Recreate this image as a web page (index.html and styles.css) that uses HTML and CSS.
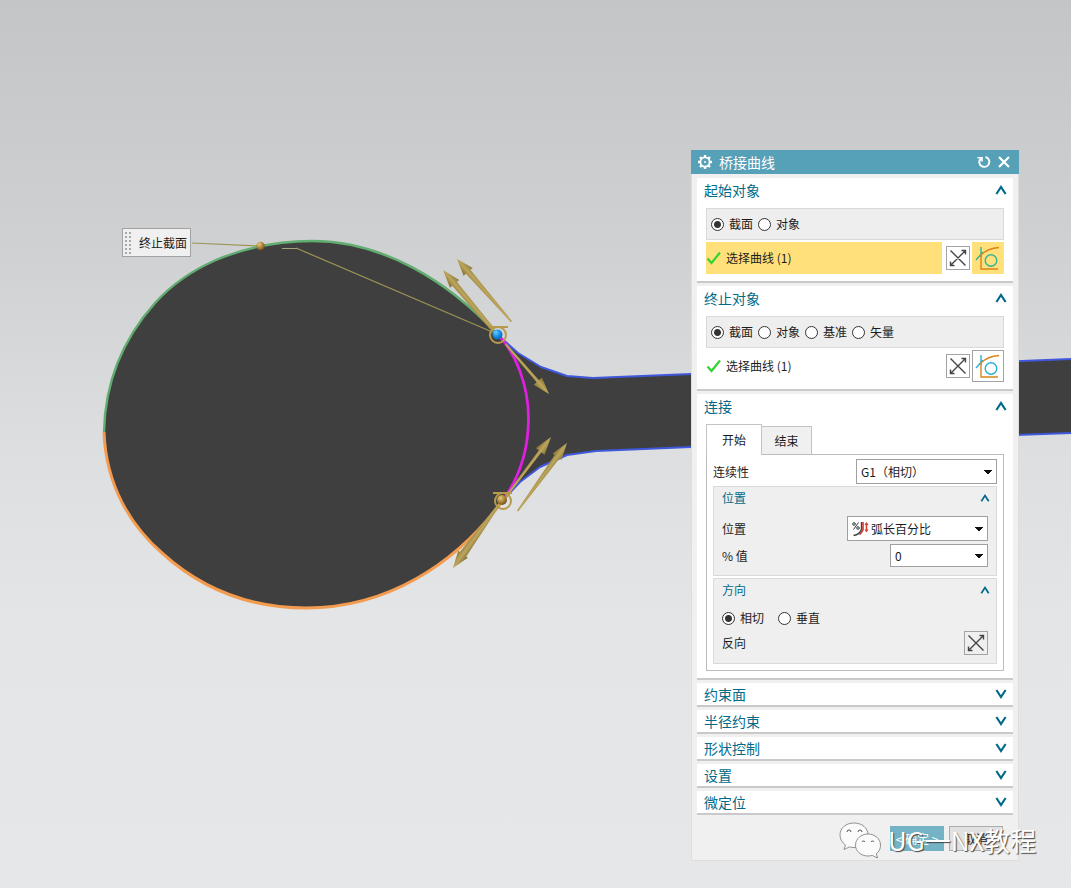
FILE: index.html
```html
<!DOCTYPE html>
<html lang="zh-CN">
<head>
<meta charset="utf-8">
<title>桥接曲线</title>
<link rel="stylesheet" href="styles.css">
</head>
<body>
<svg class="defs" width="0" height="0" aria-hidden="true">
  <defs>
    <symbol id="i-up" viewBox="0 0 12 10"><path d="M1.400 9 6 2l4.600 7" fill="none" stroke="currentColor" stroke-width="2.200"/></symbol>
    <symbol id="i-down" viewBox="0 0 12 10"><path d="M1.400 1 6 8l4.600-7" fill="none" stroke="currentColor" stroke-width="2.200"/></symbol>
    <symbol id="i-reverse" viewBox="0 0 22 22"><path d="M3.500 3.500l15 15M3.500 18.500l15-15M14.500 3.500h4v4M3.500 14.500v4h4" fill="none" stroke="#444" stroke-width="1.400"/></symbol>
    <symbol id="i-curve" viewBox="0 0 30 30"><path class="line-a" d="M8 4v10M3 17l7-8"/><circle class="line-a" cx="18" cy="17.500" r="5.800"/><path class="line-b" d="M26 4.500C18 5 12 8 8 12v14h17"/></symbol>
    <symbol id="i-check" viewBox="0 0 16 14"><path d="M1.500 7.500 5.500 12 14 1.500" fill="none" stroke="#35d435" stroke-width="2.200"/></symbol>
    <linearGradient id="gold" x1="0" y1="0" x2="0" y2="1"><stop offset="0" stop-color="#8a7838"/><stop offset=".5" stop-color="#bda65c"/><stop offset="1" stop-color="#7d6b30"/></linearGradient>
    <radialGradient id="ball" cx=".35" cy=".3" r=".8"><stop offset="0" stop-color="#e8c77a"/><stop offset=".5" stop-color="#ae863b"/><stop offset="1" stop-color="#5d4620"/></radialGradient>
    <radialGradient id="blue" cx=".35" cy=".3" r=".8"><stop offset="0" stop-color="#6cc8ff"/><stop offset=".5" stop-color="#1590e4"/><stop offset="1" stop-color="#0863ad"/></radialGradient>
  </defs>
</svg>

<main class="viewport">
  <svg class="scene" viewBox="0 0 1071 888" preserveAspectRatio="xMinYMin slice" aria-hidden="true">
    <path fill="#3f3f3f" d="M104 432C105 380 123 339 155 303 183 272 233 242 312 241 383 241 448 281 497 334L518 353 541 367 567 376 593 378 691 374 1071 359V433L691 447 596 451 567 455 540 467 520 482 503 500C455 566 385 608 306 608 253 608 205 592 162 553 131 526 106 486 104 432Z"/>
    <g fill="none" stroke-width="2" stroke-linejoin="round">
      <path stroke="#3f58dc" d="M499 336 518 353 541 367 567 376 593 378 691 374 1071 359M503 500 520 482 540 467 567 455 596 451 691 447 1071 433"/>
      <path stroke="#62ad70" stroke-width="2.400" d="M104 432C105 380 123 339 155 303 183 272 233 242 312 241 383 241 448 281 497 334"/>
      <path stroke="#f39b4e" stroke-width="3" d="M104 432C106 486 131 526 162 553 205 592 253 608 306 608 385 608 455 566 503 500"/>
      <path stroke="#df20df" stroke-width="2.800" d="M499 336C515 352 528.500 385 528.500 418 528.500 450 519 478 503 500"/>
      <path stroke="#9d9456" stroke-width="1.200" d="M192 243 260 246M296 248 497 334"/>
      <path stroke="#aaa27c" stroke-width="1" d="M282 248.500H297"/>
    </g>
    <circle cx="260.500" cy="246" r="4.300" fill="url(#ball)"/>
    <g fill="url(#gold)">
      <g transform="translate(457 259) rotate(49)"><path d="M0 0 17-6V6ZM16-3 83-.800V.800L16 3Z"/></g>
      <g transform="translate(443 270) rotate(50)"><path d="M0 0 18-6V6ZM17-3 76-2V2L17 3Z"/></g>
      <g transform="translate(549 394) rotate(229)"><path d="M0 0 17-5.500V5.500ZM16-1.500 66-1V1L16 1.500Z"/></g>
      <g transform="translate(551 437) rotate(127)"><path d="M0 0 18-5.500V5.500ZM17-1.600 78-1V1L17 1.600Z"/></g>
      <g transform="translate(567 443) rotate(126)"><path d="M0 0 17-5.500V5.500ZM16-3 84-.800V.800L16 3Z"/></g>
      <g transform="translate(453 568) rotate(-54)"><path d="M0 0 17-6V6ZM16-4 82-1V1L16 4Z"/></g>
    </g>
    <g fill="none" stroke="#b89a4d" stroke-width="2">
      <path d="M490 327H508"/><circle cx="498" cy="335" r="8"/>
      <path d="M493 493H512"/><circle cx="503" cy="501" r="8"/>
    </g>
    <circle cx="497.500" cy="334.500" r="5" fill="url(#blue)"/>
    <circle cx="502" cy="500" r="5" fill="url(#ball)"/>
  </svg>

  <div class="callout">
    <svg class="grip" viewBox="0 0 6 22" aria-hidden="true"><path d="M1 0v22M5 0v22" stroke="#a8a8a8" stroke-width="2" stroke-dasharray="2 2"/></svg>
    终止截面
  </div>

  <form class="dialog" aria-label="桥接曲线">
    <header class="titlebar">
      <svg class="gear" viewBox="0 0 16 16" aria-hidden="true"><circle cx="8" cy="8" r="4.600" fill="none" stroke="#fff" stroke-width="1.800"/><circle cx="8" cy="8" r="1" fill="#fff"/><path d="M8 1v2M8 13v2M1 8h2M13 8h2M3 3l1.500 1.500M11.500 11.500 13 13M3 13l1.500-1.500M11.500 4.500 13 3" stroke="#fff" stroke-width="2.400"/></svg>
      <h1>桥接曲线</h1>
      <button type="button" class="tool" aria-label="重置"><svg viewBox="0 0 14 14" aria-hidden="true"><path d="M8.500 2a5 5 0 1 1-6.200 4.200L4 3.500" fill="none" stroke="#fff" stroke-width="2"/><path d="M.5 2.800H5V6.500" fill="none" stroke="#fff" stroke-width="1.600"/></svg></button>
      <button type="button" class="tool" aria-label="关闭"><svg viewBox="0 0 14 14" aria-hidden="true"><path d="M2 2l10 10M12 2 2 12" stroke="#fff" stroke-width="2.200"/></svg></button>
    </header>

    <div class="sections">
      <section class="section">
        <h2><button type="button" class="head">起始对象<svg aria-hidden="true"><use href="#i-up"/></svg></button></h2>
        <div class="content">
          <div class="radios boxed">
            <label><input type="radio" name="start" checked>截面</label>
            <label><input type="radio" name="start">对象</label>
          </div>
          <div class="pick active">
            <div class="pick-text"><svg aria-hidden="true"><use href="#i-check"/></svg>选择曲线 (1)</div>
            <button type="button" class="reverse" aria-label="反向"><svg aria-hidden="true"><use href="#i-reverse"/></svg></button>
            <button type="button" class="curve" aria-label="曲线"><svg aria-hidden="true"><use href="#i-curve"/></svg></button>
          </div>
        </div>
      </section>

      <section class="section">
        <h2><button type="button" class="head">终止对象<svg aria-hidden="true"><use href="#i-up"/></svg></button></h2>
        <div class="content">
          <div class="radios boxed">
            <label><input type="radio" name="end" checked>截面</label>
            <label><input type="radio" name="end">对象</label>
            <label><input type="radio" name="end">基准</label>
            <label><input type="radio" name="end">矢量</label>
          </div>
          <div class="pick">
            <div class="pick-text"><svg aria-hidden="true"><use href="#i-check"/></svg>选择曲线 (1)</div>
            <button type="button" class="reverse" aria-label="反向"><svg aria-hidden="true"><use href="#i-reverse"/></svg></button>
            <button type="button" class="curve" aria-label="曲线"><svg aria-hidden="true"><use href="#i-curve"/></svg></button>
          </div>
        </div>
      </section>

      <section class="section">
        <h2><button type="button" class="head">连接<svg aria-hidden="true"><use href="#i-up"/></svg></button></h2>
        <div class="content">
          <div class="tabs" role="tablist">
            <button type="button" role="tab" aria-selected="true" class="tab selected">开始</button>
            <button type="button" role="tab" aria-selected="false" class="tab">结束</button>
          </div>
          <div class="page" role="tabpanel">
            <div class="row">
              <label for="continuity">连续性</label>
              <select id="continuity" class="wide"><option>G1（相切）</option></select>
            </div>
            <div class="group">
              <h3><button type="button" class="head small">位置<svg aria-hidden="true"><use href="#i-up"/></svg></button></h3>
              <div class="fields">
                <div class="row">
                  <label for="position">位置</label>
                  <div class="with-icon">
                    <svg viewBox="0 0 17 16" aria-hidden="true"><g fill="none"><circle cx="2" cy="3" r="1.300" stroke="#333"/><circle cx="6" cy="7" r="1.300" stroke="#333"/><path d="M6.500 1.500 1.500 8.500" stroke="#333"/><path d="M9.500 1v7c-1 4-4 6-8 6.500" stroke="#444" stroke-width="1.400"/><path d="M11 1v8c-1 2-2 3.500-3.500 4.500" stroke="#c33" stroke-width="1.600"/><path d="M14.500 2v8" stroke="#d9412f" stroke-width="1.600"/></g><path d="M12.500 4 14.500 1 16.500 4ZM12.500 8.500 14.500 11.500 16.500 8.500Z" fill="#d9412f"/></svg>
                    <select id="position" class="wide"><option>弧长百分比</option></select>
                  </div>
                </div>
                <div class="row short">
                  <label for="percent">% 值</label>
                  <select id="percent"><option>0</option></select>
                </div>
              </div>
            </div>
            <div class="group">
              <h3><button type="button" class="head small">方向<svg aria-hidden="true"><use href="#i-up"/></svg></button></h3>
              <div class="fields direction">
                <div class="radios spaced">
                  <label><input type="radio" name="direction" checked>相切</label>
                  <label><input type="radio" name="direction">垂直</label>
                </div>
                <div class="row short">
                  <label for="flip">反向</label>
                  <button type="button" id="flip" class="reverse"><svg aria-hidden="true"><use href="#i-reverse"/></svg></button>
                </div>
              </div>
            </div>
          </div>
        </div>
      </section>

      <section class="section closed"><h2><button type="button" class="head">约束面<svg aria-hidden="true"><use href="#i-down"/></svg></button></h2></section>
      <section class="section closed"><h2><button type="button" class="head">半径约束<svg aria-hidden="true"><use href="#i-down"/></svg></button></h2></section>
      <section class="section closed"><h2><button type="button" class="head">形状控制<svg aria-hidden="true"><use href="#i-down"/></svg></button></h2></section>
      <section class="section closed"><h2><button type="button" class="head">设置<svg aria-hidden="true"><use href="#i-down"/></svg></button></h2></section>
      <section class="section closed"><h2><button type="button" class="head">微定位<svg aria-hidden="true"><use href="#i-down"/></svg></button></h2></section>
    </div>

    <footer class="actions">
      <button type="button" class="btn primary">&lt; 确定 &gt;</button>
      <button type="button" class="btn">取消</button>
    </footer>
  </form>

  <div class="watermark">
    <svg viewBox="0 0 42 38" aria-hidden="true">
      <g fill="#fbfbfb" stroke="#777" stroke-width=".8">
        <path d="M15 2C7 2 1 7 1 14c0 4 2 7.500 5.500 10L5 28.500l5.500-2.600c1.500.4 3 .6 4.500.6 8 0 14-5.500 14-12.500S23 2 15 2Z"/>
        <path d="M29 13c-7 0-12.500 5-12.500 11.200S22 35 29 35c1.600 0 3-.2 4.300-.6L38.500 37l-1.200-4.200c2.700-2 4.200-5 4.200-8.600C41.500 18 36 13 29 13Z"/>
      </g>
      <path d="M8 11a2 2 0 0 1 4 0M19 11a2 2 0 0 1 4 0M23 21a1.600 1.600 0 0 1 3 0M32 21a1.600 1.600 0 0 1 3 0" fill="none" stroke="#555"/>
    </svg>
    <span>UG一NX教程</span>
  </div>
</main>
</body>
</html>
```

FILE: styles.css
```css
* { box-sizing: border-box; }

body {
  margin: 0;
  font: 12px/16px "Noto Sans CJK SC", sans-serif;
  color: #1c1c1c;
}

button, select, input { font: inherit; color: inherit; margin: 0; }
button { padding: 0; border: 0; background: none; }
h1, h2, h3 { margin: 0; font-weight: 400; }

.defs { position: absolute; }

.viewport {
  position: relative;
  min-height: 100vh;
  overflow: hidden;
  background: linear-gradient(#c4c5c7, #cfd0d2 27%, #dcdee0 50%, #e4e5e7 70%, #e6e7e9);
}

.scene {
  position: absolute;
  inset: 0;
  width: 100%;
  height: 100%;
}

.callout {
  position: absolute;
  left: 122px;
  top: 228px;
  display: flex;
  align-items: center;
  gap: 8px;
  height: 29px;
  padding: 0 3px 0 2px;
  border: 1px solid #a2a2a2;
  background: #f0f0f0;
}

.grip { width: 6px; height: 22px; }

.dialog {
  position: absolute;
  left: 691px;
  top: 150px;
  width: 328px;
  border: 1px solid #dedede;
  border-top: 0;
  background: #f0f0f0;
}

.titlebar {
  display: flex;
  align-items: center;
  gap: 6px;
  height: 24px;
  margin: 0 -1px;
  padding: 0 8px 0 6px;
  background: #56a0b8;
  color: #fff;
}

.titlebar h1 { flex: 1; font-size: 14px; line-height: 24px; }
.gear { width: 16px; height: 16px; }
.tool { width: 14px; height: 14px; }
.tool svg { display: block; width: 14px; height: 14px; }

.sections {
  display: flex;
  flex-direction: column;
  gap: 3px;
  padding: 4px 5px 0;
}

.section { border-bottom: 2px solid #c9c9c9; background: #fff; }

.head {
  display: flex;
  align-items: center;
  justify-content: space-between;
  width: 100%;
  height: 24px;
  padding: 0 6px 0 7px;
  font-size: 14px;
  color: #006a88;
}

.head svg { width: 12px; height: 10px; }
.closed .head { height: 22px; }
.head.small { height: 22px; padding: 0 6px 0 8px; font-size: 12px; }
.head.small svg { width: 10px; height: 8px; }

.content { padding: 6px 9px 7px; }

.radios { display: flex; align-items: center; gap: 5px; }
.radios label { display: flex; align-items: center; gap: 5px; }
.radios.boxed { height: 32px; padding: 0 4px; border: 1px solid #d9d9d9; background: #eee; }
.radios.spaced { gap: 14px; height: 24px; }

input[type="radio"] {
  appearance: none;
  width: 13px;
  height: 13px;
  border: 1px solid #333;
  border-radius: 50%;
  background: #fff;
}

input[type="radio"]:checked { background: radial-gradient(circle, #333 0 3px, #fff 4px); }

.pick { display: flex; align-items: center; height: 32px; margin-top: 2px; }
.pick-text { display: flex; flex: 1; align-items: center; gap: 4px; height: 32px; margin-right: 4px; }
.pick-text svg { width: 16px; height: 14px; }
.active .pick-text, .active .curve { background: #ffe07a; }

.reverse { width: 24px; height: 24px; border: 1px solid #a3a3a3; }
.reverse svg { display: block; width: 22px; height: 22px; }

.curve { width: 32px; height: 32px; margin-left: 2px; border: 1px solid #a3a3a3; }
.active .curve { border-color: #ffe07a; }
.curve svg { display: block; width: 30px; height: 30px; fill: none; stroke-width: 1.4; }
.line-a { stroke: #28b0d8; }
.line-b { stroke: #dc8418; }
.active .curve { --ring: #35b39a; }
.line-a { stroke: var(--ring, #28b0d8); }

.tabs { display: flex; align-items: flex-end; height: 30px; }
.tab { width: 50px; height: 28px; border: 1px solid #c3c3c3; border-width: 1px 1px 0 0; background: #f0f0f0; }
.tab.selected { z-index: 1; width: 56px; height: 31px; margin-bottom: -1px; border-left-width: 1px; background: #fff; }

.page { padding: 4px 6px 6px; border: 1px solid #bcbcbc; }

.row { display: flex; align-items: center; justify-content: space-between; height: 25px; }

select {
  appearance: none;
  width: 98px;
  height: 23px;
  padding: 0 16px 0 4px;
  border: 1px solid #a0a0a0;
  border-radius: 0;
  background:
    linear-gradient(to bottom left, #111 50%, transparent 51%) right 8px center / 4px 4px no-repeat,
    linear-gradient(to bottom right, #111 50%, transparent 51%) right 4px center / 4px 4px no-repeat,
    #fff;
}

select.wide { width: 141px; height: 25px; }

.with-icon { display: grid; align-items: center; }
.with-icon > * { grid-area: 1 / 1; }
.with-icon svg { z-index: 1; width: 17px; height: 16px; margin-left: 5px; pointer-events: none; }
.with-icon select { padding-left: 23px; }

.group { margin-top: 2px; border: 1px solid #dadada; background: #efefef; }
.fields { display: flex; flex-direction: column; gap: 3px; padding: 7px 8px 8px; }
.fields.direction { gap: 1px; padding-top: 5px; }
.row.short { height: 23px; }
.direction .row.short { height: 24px; }

.actions { display: flex; justify-content: flex-end; gap: 5px; padding: 11px 15px 9px; }
.btn { width: 54px; height: 25px; border: 1px solid #adadad; background: #e1e1e1; }
.btn.primary { border-color: #74b3c5; background: #74b3c5; color: #fff; }

.watermark {
  position: absolute;
  left: 839px;
  top: 821px;
  display: flex;
  align-items: center;
  gap: 7px;
  font-size: 26px;
  line-height: 38px;
  color: #fff;
  white-space: nowrap;
  text-shadow: 1px 1px 1px #444;
  pointer-events: none;
}

.watermark svg { width: 42px; height: 38px; }
```
